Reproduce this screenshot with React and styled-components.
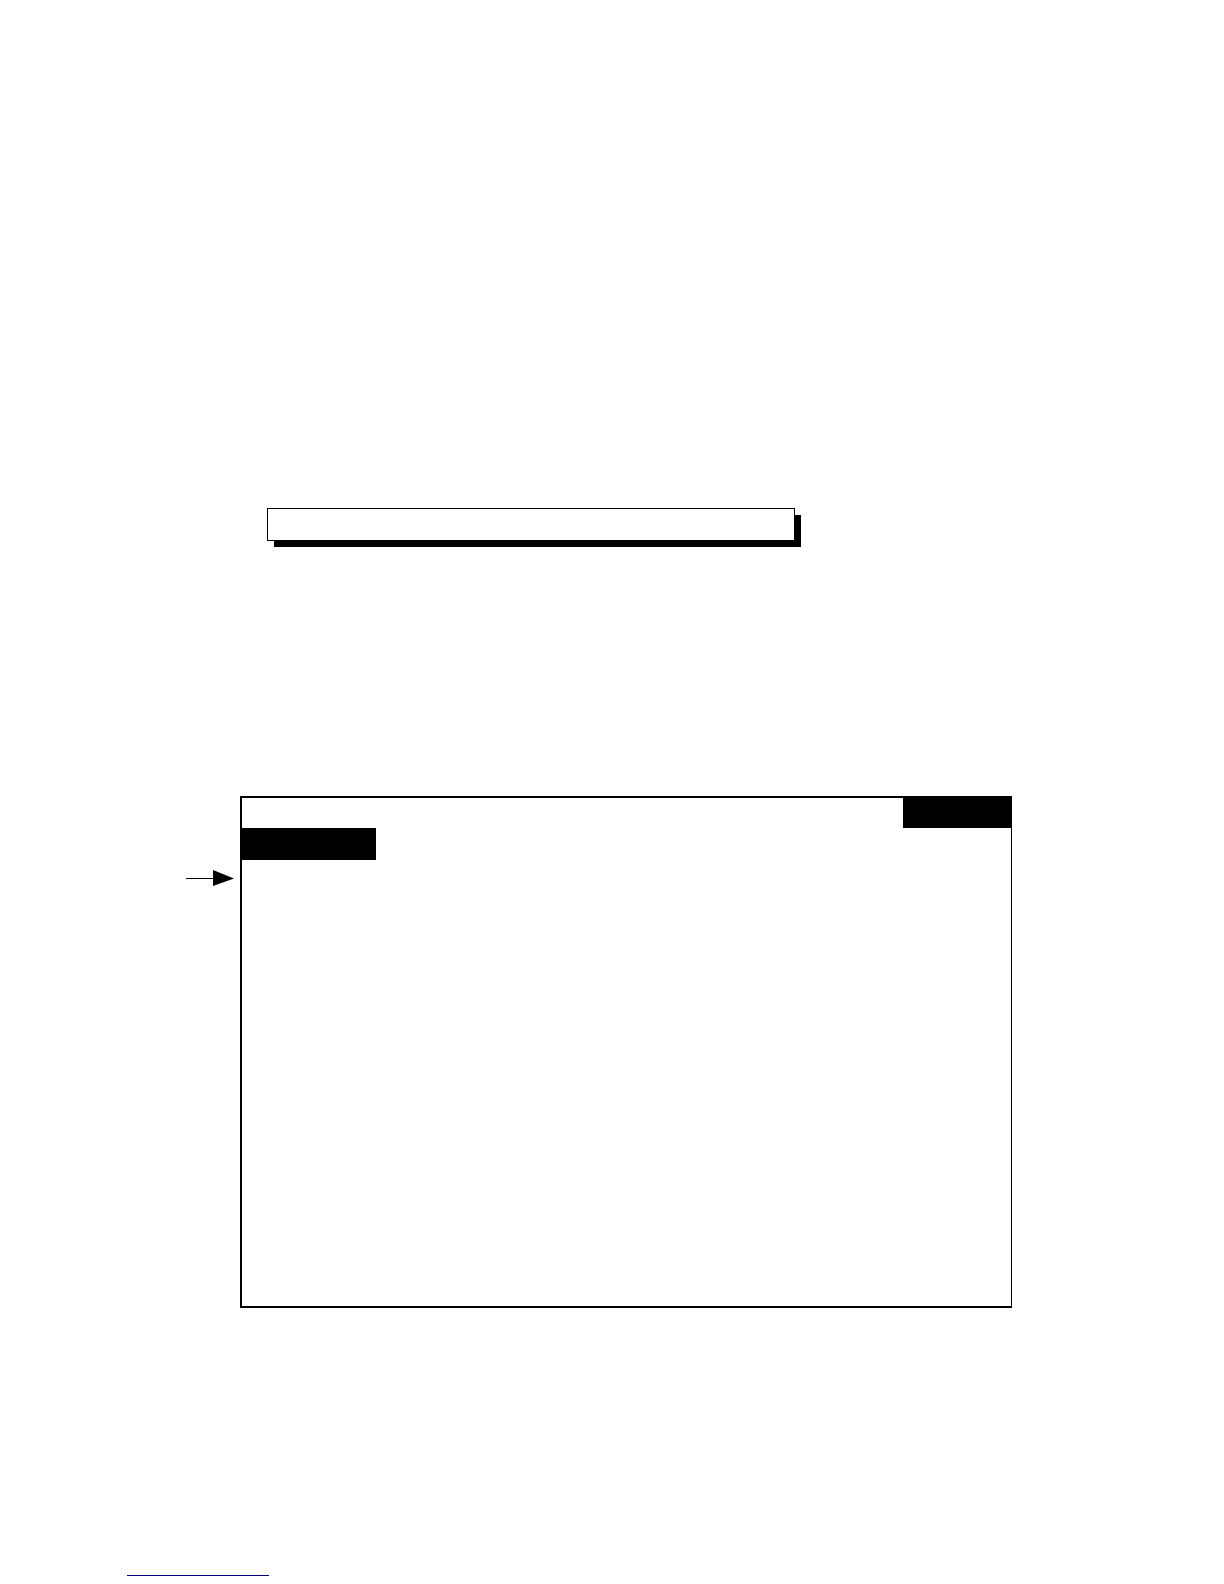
import React from "react";
import styled, { createGlobalStyle } from "styled-components";

const GlobalStyle = createGlobalStyle`
  * {
    box-sizing: border-box;
  }

  body {
    margin: 0;
    background: #fff;
    color: #000;
    font-family: "Liberation Sans", Arial, sans-serif;
  }
`;

const App = () => {
  return (
    <>
      <GlobalStyle />
      <Page>
        <Callout />

        <Figure>
          <Pointer viewBox="0 0 48 16" aria-hidden="true">
            <path d="M0 8.5H28" stroke="#000" />
            <path d="M27 0L48 8.5L27 16Z" />
          </Pointer>

          <Screen>
            <Row $end>
              <Block $width="108px" />
            </Row>
            <Row>
              <Block $width="134px" />
            </Row>
            <ScreenBody />
          </Screen>
        </Figure>

        <Footer>
          <FooterLink href="#" aria-label="Home page" />
        </Footer>
      </Page>
    </>
  );
};

export default App;

const Page = styled.main`
  display: flex;
  flex-direction: column;
  width: 100%;
  padding: 508px 0 8px;
`;

const Callout = styled.div`
  position: relative;
  z-index: 0;
  height: 33px;
  margin: 0 429px 0 267px;
  border: 1px solid #000;
  background: #fff;
  background-clip: padding-box;

  /* hard drop shadow, drawn under the box */
  &::before {
    content: "";
    position: absolute;
    inset: 6px -7px -7px 6px;
    z-index: -2;
    background: #000;
  }

  &::after {
    content: "";
    position: absolute;
    inset: 0;
    z-index: -1;
    background: #fff;
  }
`;

const Figure = styled.section`
  display: flex;
  align-items: flex-start;
  gap: 6px;
  margin-top: 255px;
  padding: 0 212px 0 186px;
`;

const Pointer = styled.svg`
  flex: none;
  width: 48px;
  height: 16px;
  margin-top: 74px;
`;

const Screen = styled.div`
  flex: 1;
  border: solid #000;
  border-width: 2px 1px 2px 2px;
`;

const Row = styled.div`
  display: flex;
  justify-content: ${({ $end }) => ($end ? "flex-end" : "flex-start")};
  height: ${({ $end }) => ($end ? "30px" : "32px")};
`;

const Block = styled.div`
  width: ${({ $width }) => $width};
  background: #000;
`;

const ScreenBody = styled.div`
  height: 446px;
`;

const Footer = styled.footer`
  display: flex;
  margin-top: 244px;
  padding-left: 127px;
`;

const FooterLink = styled.a`
  width: 142px;
  height: 24px;
  border-bottom: 1px solid #000080;
`;
